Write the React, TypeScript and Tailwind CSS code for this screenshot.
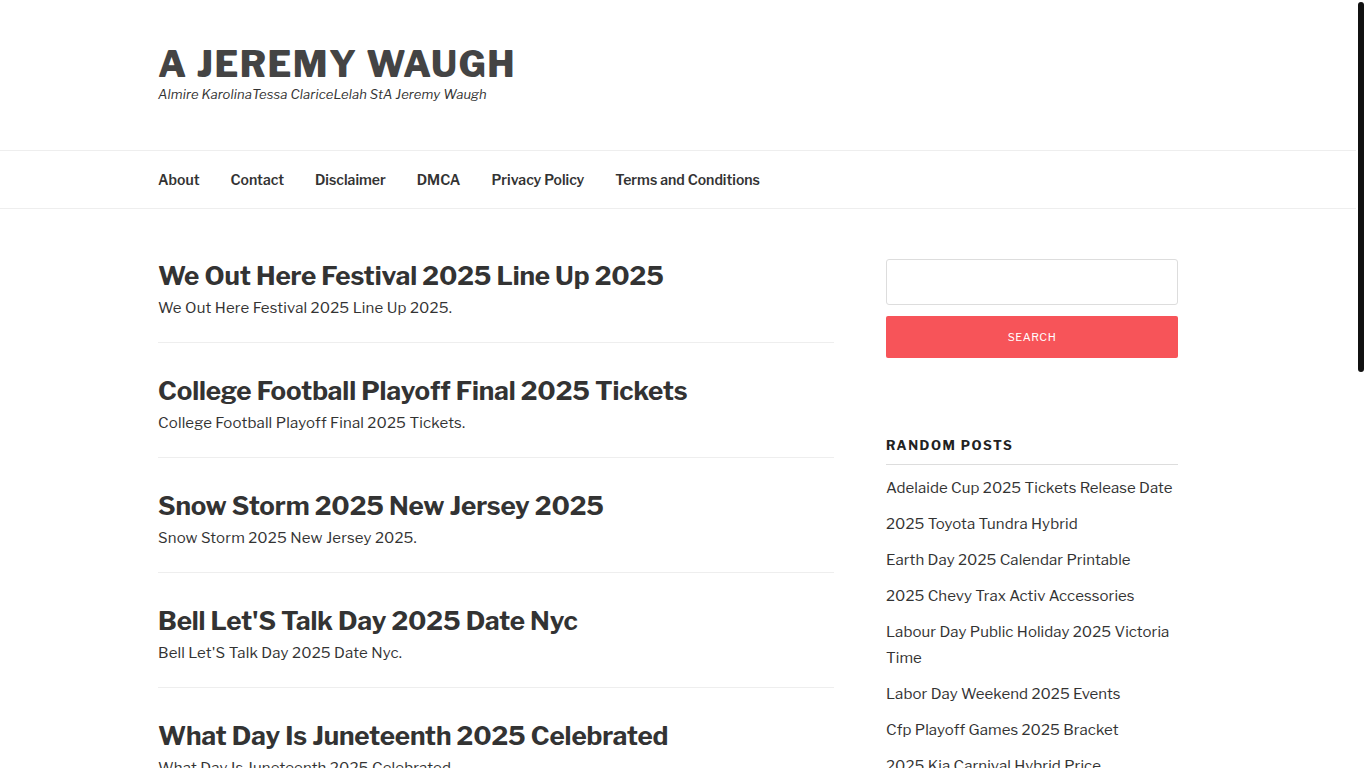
import React from "react";

const posts = [
  "We Out Here Festival 2025 Line Up 2025",
  "College Football Playoff Final 2025 Tickets",
  "Snow Storm 2025 New Jersey 2025",
  "Bell Let'S Talk Day 2025 Date Nyc",
  "What Day Is Juneteenth 2025 Celebrated",
];

const randomPosts = [
  "Adelaide Cup 2025 Tickets Release Date",
  "2025 Toyota Tundra Hybrid",
  "Earth Day 2025 Calendar Printable",
  "2025 Chevy Trax Activ Accessories",
  "Labour Day Public Holiday 2025 Victoria Time",
  "Labor Day Weekend 2025 Events",
  "Cfp Playoff Games 2025 Bracket",
  "2025 Kia Carnival Hybrid Price",
];

const nav = ["About", "Contact", "Disclaimer", "DMCA", "Privacy Policy", "Terms and Conditions"];

export default function App() {
  return (
    <div
      className="h-screen overflow-hidden bg-white text-[#333] flex"
      style={{ fontFamily: '"Libre Franklin", Inter, "Noto Sans", sans-serif' }}
    >
      <div className="w-[1356px] shrink-0">
        <header className="h-[150px]">
          <div className="w-[1040px] mx-auto pt-[44px]">
            <h1 className="text-[36px] leading-[40px] font-extrabold tracking-[0.04em] uppercase text-[#444]">
              A Jeremy Waugh
            </h1>
            <p className="text-[13px] leading-[20px] italic text-[#333] tracking-[0.01em]">
              Almire KarolinaTessa ClariceLelah StA Jeremy Waugh
            </p>
          </div>
        </header>
        <nav className="border-t border-b border-[#eee] h-[59px]">
          <ul className="w-[1040px] mx-auto flex items-center h-full gap-[31px]">
            {nav.map((n) => (
              <li key={n} className="text-[14px] font-semibold text-[#333]">
                {n}
              </li>
            ))}
          </ul>
        </nav>
        <div className="w-[1040px] mx-auto flex">
          <main className="w-[676px] pt-[19px]">
            {posts.map((p) => (
              <article key={p} className="pt-[31px] pb-[22px] border-b border-[#eee]">
                <h2 className="text-[26px] leading-[34px] font-bold text-[#333] tracking-[-0.005em]">{p}</h2>
                <p className="mt-[3px] text-[15px] leading-[24px] text-[#333] tracking-[0.01em]">{p}.</p>
              </article>
            ))}
          </main>
          <aside className="w-[292px] ml-[52px] pt-[50px]">
            <div className="h-[46px] border border-[#ddd] rounded-[3px]" />
            <button className="mt-[11px] w-full h-[42px] rounded-[2px] bg-[#f75459] text-white text-[11px] tracking-[0.05em] uppercase font-normal">
              Search
            </button>
            <h2 className="mt-[77px] text-[13px] leading-[20px] font-bold uppercase tracking-[0.12em] text-[#222] pb-[9px] border-b border-[#ddd]">
              Random Posts
            </h2>
            <ul className="pt-[5px]">
              {randomPosts.map((r) => (
                <li key={r} className="py-[5px] text-[15px] leading-[26px] text-[#333] tracking-[0.005em]">
                  {r}
                </li>
              ))}
            </ul>
          </aside>
        </div>
      </div>
      <div className="w-[10px] shrink-0 bg-white pt-[2px] pl-[2px]">
        <div className="w-[6px] h-[370px] rounded-full bg-[#111]" />
      </div>
    </div>
  );
}
